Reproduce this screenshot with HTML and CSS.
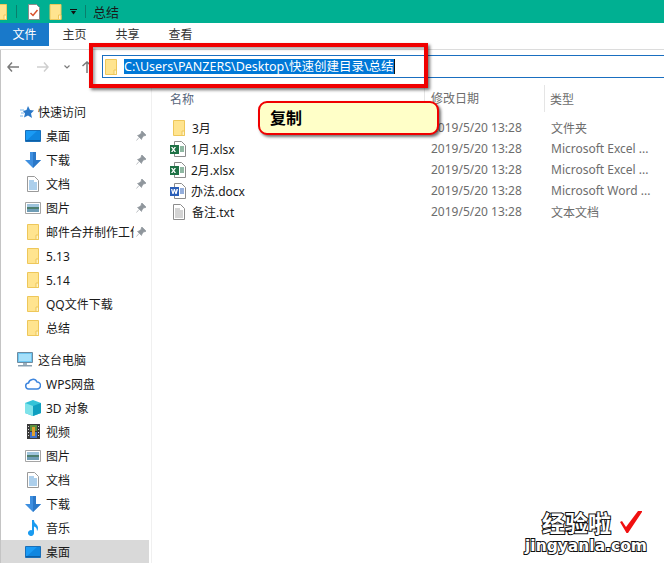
FILE: index.html
```html
<!DOCTYPE html>
<html lang="zh-CN">
<head>
  <meta charset="UTF-8" />
  <title>总结</title>
  <link rel="stylesheet" href="styles.css">
</head>
<body>
  <svg class="defs" width="0" height="0">
    <symbol id="folder" viewBox="0 0 12 16"><path d="M.5.5h11v15H.5z" fill="#ffe48f" stroke="#eec75a"/><path d="M9 11h2.500v4.500H9z" fill="#fff3c4" stroke="#eec75a"/></symbol>
    <symbol id="desktop" viewBox="0 0 16 12"><path d="M.5.5h15v11H.5z" fill="#1a9bf5" stroke="#1a6fb8"/><path d="M1 11L12 1h3v10z" fill="#0f86e0"/><path d="M1 10h14v1H1z" fill="#0c5fa6"/></symbol>
    <symbol id="down" viewBox="0 0 16 16"><path d="M5 0h6v8h5l-8 8-8-8h5z" fill="#3e8fe0"/><path d="M8 0h3v8h5l-8 8z" fill="#2b78c8"/></symbol>
    <symbol id="doc" viewBox="0 0 12 16"><path d="M.5.500h7l4 4v11H.500z" fill="#fff" stroke="#9a9a9a"/><path d="M2 5h5M2 7h8M2 9h8M2 11h8M2 13h8" stroke="#5a9fd8"/></symbol>
    <symbol id="pic" viewBox="0 0 16 12"><path d="M.5.500h15v11H.500z" fill="#fff" stroke="#a5a5a5"/><path d="M2 2h12v3H2z" fill="#9fc4dc"/><path d="M2 5h12v2H2z" fill="#4d7f6e"/><path d="M2 7h12v3H2z" fill="#6f9db5"/></symbol>
    <symbol id="star" viewBox="0 0 14 12"><path d="M8 0l2 4 4 .5-3 3 1 4.500-4-2.500-4 2 1-4L3 5l3.500-1z" fill="#2a78c8"/><path d="M0 4h4M1 7h3M0 10h3" stroke="#7ab8ec"/></symbol>
    <symbol id="pin" viewBox="0 0 10 10"><path d="M6 0l4 4-1 1-1-.5L6 7l-.5 1.500L1.500 4.500 3 4l2.500-2L5 1zM3 6.500L.5 9.500" fill="#8f969c" stroke="#8f969c" stroke-width=".6"/></symbol>
    <symbol id="pc" viewBox="0 0 16 15"><path d="M.5.500h15v10H.500z" fill="#6cc6f2" stroke="#6d8ba0"/><path d="M2 2h12v7H2z" fill="#a6e0fa"/><path d="M6 11h4v2H6z" fill="#9fb2bf"/><path d="M1 13h14v1.500H1z" fill="#8aa0b0"/></symbol>
    <symbol id="cloud" viewBox="0 0 16 12"><path d="M4 11a3 3 0 0 1-.5-6A4.500 4.500 0 0 1 12 4a3.500 3.500 0 0 1 0 7z" fill="#fff" stroke="#3d85dd" stroke-width="1.500"/></symbol>
    <symbol id="cube" viewBox="0 0 16 16"><path d="M8 0l8 3v10l-8 3-8-3V3z" fill="#33c3d8"/><path d="M8 6l8-3v10l-8 3z" fill="#0f9fc0"/><path d="M0 3l8 3v10l-8-3z" fill="#7fe3ea"/></symbol>
    <symbol id="film" viewBox="0 0 13 15"><path d="M0 0h13v15H0z" fill="#3a3a3a"/><path d="M3 1h7v6H3z" fill="#5b8f3f"/><path d="M3 8h7v6H3z" fill="#3f72c8"/><path d="M5 3h3v9H5z" fill="#e0a030"/><path d="M1 2h1v1H1zM1 5h1v1H1zM1 8h1v1H1zM1 11h1v1H1zM11 2h1v1h-1zM11 5h1v1h-1zM11 8h1v1h-1zM11 11h1v1h-1z" fill="#ddd"/></symbol>
    <symbol id="music" viewBox="0 0 12 16"><path d="M5 0h2c0 4 4 4 4 8 0 1.500-.5 2.500-1 3 0-3-1.500-4-3-4.500V13a3 3 0 1 1-2-2.800z" fill="#1a9bf0"/></symbol>
    <symbol id="sheet" viewBox="0 0 16 16"><path d="M4.500.500h7l4 4v11h-11z" fill="#fff" stroke="#8c8c8c"/><path d="M10 6h4M10 8h4M10 10h4" stroke="#1e7145"/><path d="M0 4h9v9H0z" fill="#1e7145"/><path d="M2.500 6l1 1.500 1-1.500h1.500L4.300 8.500 6 11H4.500l-1-1.500-1 1.500H1l1.700-2.500L1 6z" fill="#fff"/></symbol>
    <symbol id="word" viewBox="0 0 16 16"><path d="M4.500.500h7l4 4v11h-11z" fill="#fff" stroke="#8c8c8c"/><path d="M10 6h4M10 8h4M10 10h4" stroke="#2b5fb8"/><path d="M0 4h9v9H0z" fill="#2b5fb8"/><path d="M1 6h1.300l.7 3 .8-3h1.200l.8 3 .7-3H8l-1.400 5H5.400l-.9-3-.9 3H2.400z" fill="#fff"/></symbol>
    <symbol id="txt" viewBox="0 0 12 16"><path d="M.5.500h7l4 4v11H.500z" fill="#fff" stroke="#8c8c8c"/><path d="M2 5h5M2 7h8M2 9h8M2 11h8M2 13h8" stroke="#a8a8a8"/></symbol>
    <symbol id="task" viewBox="0 0 12 16"><path d="M.5.500h8l3 3v12H.500z" fill="#fff" stroke="#8c8c8c"/><path d="M2.500 9l2.500 2.500L9.500 6" fill="none" stroke="#d8502a" stroke-width="1.500"/></symbol>
  </svg>

  <header class="titlebar">
    <svg class="qa-cut"><use href="#folder"/></svg>
    <span class="qa-sep"></span>
    <svg class="qa-task"><use href="#task"/></svg>
    <svg class="qa-folder"><use href="#folder"/></svg>
    <span class="qa-drop"></span>
    <span class="qa-sep"></span>
    <span class="title">总结</span>
  </header>

  <nav class="tabs">
    <span class="tab tab-file">文件</span>
    <span class="tab">主页</span>
    <span class="tab">共享</span>
    <span class="tab">查看</span>
  </nav>

  <div class="navbar">
    <svg class="nav-btn" width="12" height="10" viewBox="0 0 12 10"><path d="M5 .5L1 5l4 4.500M1 5h11" fill="none" stroke="#7a7a7a" stroke-width="1.500"/></svg>
    <svg class="nav-btn nav-forward" width="12" height="10" viewBox="0 0 12 10"><path d="M7 .5L11 5l-4 4.500M11 5H0" fill="none" stroke="#cfcfcf" stroke-width="1.500"/></svg>
    <svg class="nav-btn nav-chevron" width="6" height="4" viewBox="0 0 6 4"><path d="M.5.500L3 3 5.500.500" fill="none" stroke="#7a7a7a" stroke-width="1.200"/></svg>
    <svg class="nav-btn nav-up" width="10" height="12" viewBox="0 0 10 12"><path d="M.5 5L5 1l4.500 4M5 1v11" fill="none" stroke="#7a7a7a" stroke-width="1.500"/></svg>
    <div class="address">
      <svg class="address-icon"><use href="#folder"/></svg>
      <span class="address-text">C:\Users\PANZERS\Desktop\快速创建目录\总结</span><span class="caret"></span>
    </div>
  </div>

  <main class="main">
    <aside class="sidebar">
      <div class="row top"><svg class="ico-star"><use href="#star"/></svg>快速访问</div>
      <div class="row"><svg class="ico-wide"><use href="#desktop"/></svg>桌面<svg class="pin"><use href="#pin"/></svg></div>
      <div class="row"><svg class="ico-wide tall"><use href="#down"/></svg>下载<svg class="pin"><use href="#pin"/></svg></div>
      <div class="row"><svg class="ico-narrow"><use href="#doc"/></svg>文档<svg class="pin"><use href="#pin"/></svg></div>
      <div class="row"><svg class="ico-wide"><use href="#pic"/></svg>图片<svg class="pin"><use href="#pin"/></svg></div>
      <div class="row"><svg class="ico-narrow"><use href="#folder"/></svg><span class="clip">邮件合并制作工作</span><svg class="pin"><use href="#pin"/></svg></div>
      <div class="row"><svg class="ico-narrow"><use href="#folder"/></svg>5.13</div>
      <div class="row"><svg class="ico-narrow"><use href="#folder"/></svg>5.14</div>
      <div class="row"><svg class="ico-narrow"><use href="#folder"/></svg>QQ文件下载</div>
      <div class="row"><svg class="ico-narrow"><use href="#folder"/></svg>总结</div>
      <div class="row top group"><svg class="ico-pc"><use href="#pc"/></svg>这台电脑</div>
      <div class="row"><svg class="ico-wide"><use href="#cloud"/></svg>WPS网盘</div>
      <div class="row"><svg class="ico-wide tall"><use href="#cube"/></svg>3D 对象</div>
      <div class="row"><svg class="ico-narrow film"><use href="#film"/></svg>视频</div>
      <div class="row"><svg class="ico-wide"><use href="#pic"/></svg>图片</div>
      <div class="row"><svg class="ico-narrow"><use href="#doc"/></svg>文档</div>
      <div class="row"><svg class="ico-wide tall"><use href="#down"/></svg>下载</div>
      <div class="row"><svg class="ico-narrow"><use href="#music"/></svg>音乐</div>
      <div class="row selected"><svg class="ico-wide"><use href="#desktop"/></svg>桌面</div>
    </aside>

    <section class="files">
      <div class="head">
        <span class="col-name">名称</span>
        <span class="col-date">修改日期</span>
        <span class="col-type">类型</span>
      </div>
      <div class="file"><span class="col-name"><svg class="file-narrow"><use href="#folder"/></svg>3月</span><span class="col-date">2019/5/20 13:28</span><span class="col-type">文件夹</span></div>
      <div class="file"><span class="col-name"><svg class="file-wide"><use href="#sheet"/></svg>1月.xlsx</span><span class="col-date">2019/5/20 13:28</span><span class="col-type">Microsoft Excel ...</span></div>
      <div class="file"><span class="col-name"><svg class="file-wide"><use href="#sheet"/></svg>2月.xlsx</span><span class="col-date">2019/5/20 13:28</span><span class="col-type">Microsoft Excel ...</span></div>
      <div class="file"><span class="col-name"><svg class="file-wide"><use href="#word"/></svg>办法.docx</span><span class="col-date">2019/5/20 13:28</span><span class="col-type">Microsoft Word ...</span></div>
      <div class="file"><span class="col-name"><svg class="file-narrow"><use href="#txt"/></svg>备注.txt</span><span class="col-date">2019/5/20 13:28</span><span class="col-type">文本文档</span></div>
    </section>
  </main>

  <div class="redbox"></div>
  <div class="callout">复制</div>

  <div class="watermark">
    <div class="wm-top">经验啦<svg class="wm-check" width="24" height="24" viewBox="0 0 24 24"><path d="M1 12l2-1 4 6L19 1h4v1L9 23H7.500z" fill="#f01010"/></svg></div>
    <div class="wm-url">jingyanla.com</div>
  </div>
</body>
</html>
```

FILE: styles.css
```css
* {
  box-sizing: border-box;
}
html, body {
  margin: 0;
  height: 100%;
  overflow: hidden;
}
body {
  font-family: "Noto Sans", "Noto Sans CJK SC", sans-serif;
  font-size: 12px;
  color: #1a1a1a;
  background: #fff;
  display: flex;
  flex-direction: column;
}
.defs {
  display: none;
}
svg {
  flex: none;
}

/* title bar */
.titlebar {
  height: 23px;
  background: #00b092;
  display: flex;
  align-items: center;
  flex: none;
}
.qa-cut {
  width: 12px;
  height: 16px;
  margin-left: -5px;
}
.qa-sep {
  width: 1px;
  height: 13px;
  background: #0a7f6c;
  margin-left: 9px;
}
.qa-task {
  width: 12px;
  height: 16px;
  margin-left: 11px;
}
.qa-folder {
  width: 13px;
  height: 16px;
  margin-left: 9px;
}
.qa-drop {
  width: 7px;
  height: 6px;
  margin-left: 8px;
  border-top: 1px solid #111;
  border-bottom: 4px solid #111;
  clip-path: polygon(0 0, 100% 0, 100% 20%, 50% 100%, 0 20%);
}
.qa-drop + .qa-sep {
  margin-left: 8px;
}
.title {
  margin-left: 7px;
  font-size: 13px;
}

/* ribbon tabs */
.tabs {
  height: 27px;
  display: flex;
  flex: none;
  border-bottom: 1px solid #dcdcdc;
}
.tab {
  width: 53px;
  text-align: center;
  line-height: 23px;
  height: 23px;
  font-size: 12px;
  color: #333;
}
.tab-file {
  width: 49px;
  background: #1979ca;
  color: #fff;
}
.tab-file + .tab {
  margin-left: -1px;
}

/* back, forward and address */
.navbar {
  height: 38px;
  flex: none;
  display: flex;
  align-items: flex-start;
  padding: 5px 0 0 6px;
  border-left: 1px solid #c4c4c4;
}
.nav-btn {
  margin-top: 7px;
}
.nav-forward {
  margin-left: 18px;
}
.nav-chevron {
  margin: 10px 0 0 15px;
}
.nav-up {
  margin: 6px 0 0 12px;
}
.address {
  flex: 1;
  height: 23px;
  margin-left: 10px;
  margin-right: -4px;
  border: 1px solid #1a6fc0;
  display: flex;
  align-items: center;
  padding-left: 2px;
}
.address-icon {
  width: 12px;
  height: 16px;
}
.address-text {
  margin-left: 7px;
  background: #0078d7;
  color: #fff;
  font-size: 12.5px;
  line-height: 15px;
  height: 15px;
  white-space: nowrap;
}
.caret {
  width: 1px;
  height: 15px;
  background: #111;
}

/* main area */
.main {
  flex: 1;
  display: flex;
  min-height: 0;
  border-left: 1px solid #c4c4c4;
}
.sidebar {
  width: 151px;
  flex: none;
  padding-top: 12px;
  border-right: 1px solid #f0f0f0;
}
.row {
  height: 24px;
  width: 148px;
  display: flex;
  align-items: center;
  padding-left: 45px;
  position: relative;
  white-space: nowrap;
}
.row.top {
  padding-left: 37px;
}
.row.group {
  margin-top: 8px;
}
.row.selected {
  background: #d9d9d9;
}
.row > svg:first-child {
  position: absolute;
}
.ico-star {
  left: 19px;
  top: 6px;
  width: 14px;
  height: 12px;
}
.ico-wide {
  left: 24px;
  top: 6px;
  width: 16px;
  height: 12px;
}
.ico-wide.tall {
  top: 4px;
  height: 16px;
}
.ico-narrow {
  left: 26px;
  top: 4px;
  width: 12px;
  height: 16px;
}
.ico-narrow.film {
  width: 13px;
  height: 15px;
}
.ico-pc {
  left: 16px;
  top: 4px;
  width: 16px;
  height: 15px;
}
.pin {
  position: absolute;
  left: 135px;
  top: 7px;
  width: 10px;
  height: 10px;
}
.clip {
  width: 88px;
  overflow: hidden;
}

/* file list */
.files {
  flex: 1;
  padding-left: 18px;
}
.head {
  height: 27px;
  margin-top: -3px;
  display: flex;
  align-items: center;
  color: #56657a;
}
.head .col-date {
  border-left: 1px solid #e5e5e5;
  border-right: 1px solid #e5e5e5;
  height: 27px;
  line-height: 27px;
  margin-left: -7px;
  padding-left: 6px;
  width: 121px;
  flex: none;
}
.head .col-type {
  padding-left: 5px;
}
.col-name {
  width: 261px;
  flex: none;
  display: flex;
  align-items: center;
}
.col-date {
  width: 120px;
  flex: none;
  color: #6d6d6d;
}
.col-type {
  color: #6d6d6d;
  white-space: nowrap;
}
.file {
  height: 21px;
  display: flex;
  align-items: center;
}
.file:nth-child(2) {
  margin-top: 5px;
}
.file-narrow {
  width: 12px;
  height: 16px;
  margin: 0 7px 0 3px;
}
.file-wide {
  width: 16px;
  height: 16px;
  margin-right: 5px;
}

/* annotations drawn on top of the window */
.redbox {
  position: absolute;
  left: 89px;
  top: 43px;
  width: 339px;
  height: 45px;
  border: 4px solid #f00000;
  box-shadow: 2px 2px 3px rgba(0, 0, 0, .55), inset 2px 2px 3px rgba(0, 0, 0, .35);
}
.callout {
  position: absolute;
  left: 258px;
  top: 101px;
  width: 181px;
  height: 34px;
  background: #ffffc8;
  border: 2px solid #f00000;
  border-radius: 9px;
  box-shadow: 2px 2px 3px rgba(0, 0, 0, .55);
  font-size: 16px;
  font-weight: bold;
  line-height: 30px;
  padding-left: 10px;
  color: #000;
}

.watermark {
  position: absolute;
  left: 525px;
  top: 510px;
  width: 130px;
  font-weight: bold;
  color: #fff;
  -webkit-text-stroke: 2px #111;
  paint-order: stroke fill;
}
.wm-top {
  display: flex;
  align-items: center;
  font-size: 23px;
  line-height: 27px;
  padding-left: 17px;
  height: 27px;
}
.wm-check {
  margin-left: 8px;
  margin-top: -3px;
}
.wm-url {
  font-family: "DejaVu Sans", sans-serif;
  font-size: 15.5px;
  line-height: 18px;
  white-space: nowrap;
}
```
